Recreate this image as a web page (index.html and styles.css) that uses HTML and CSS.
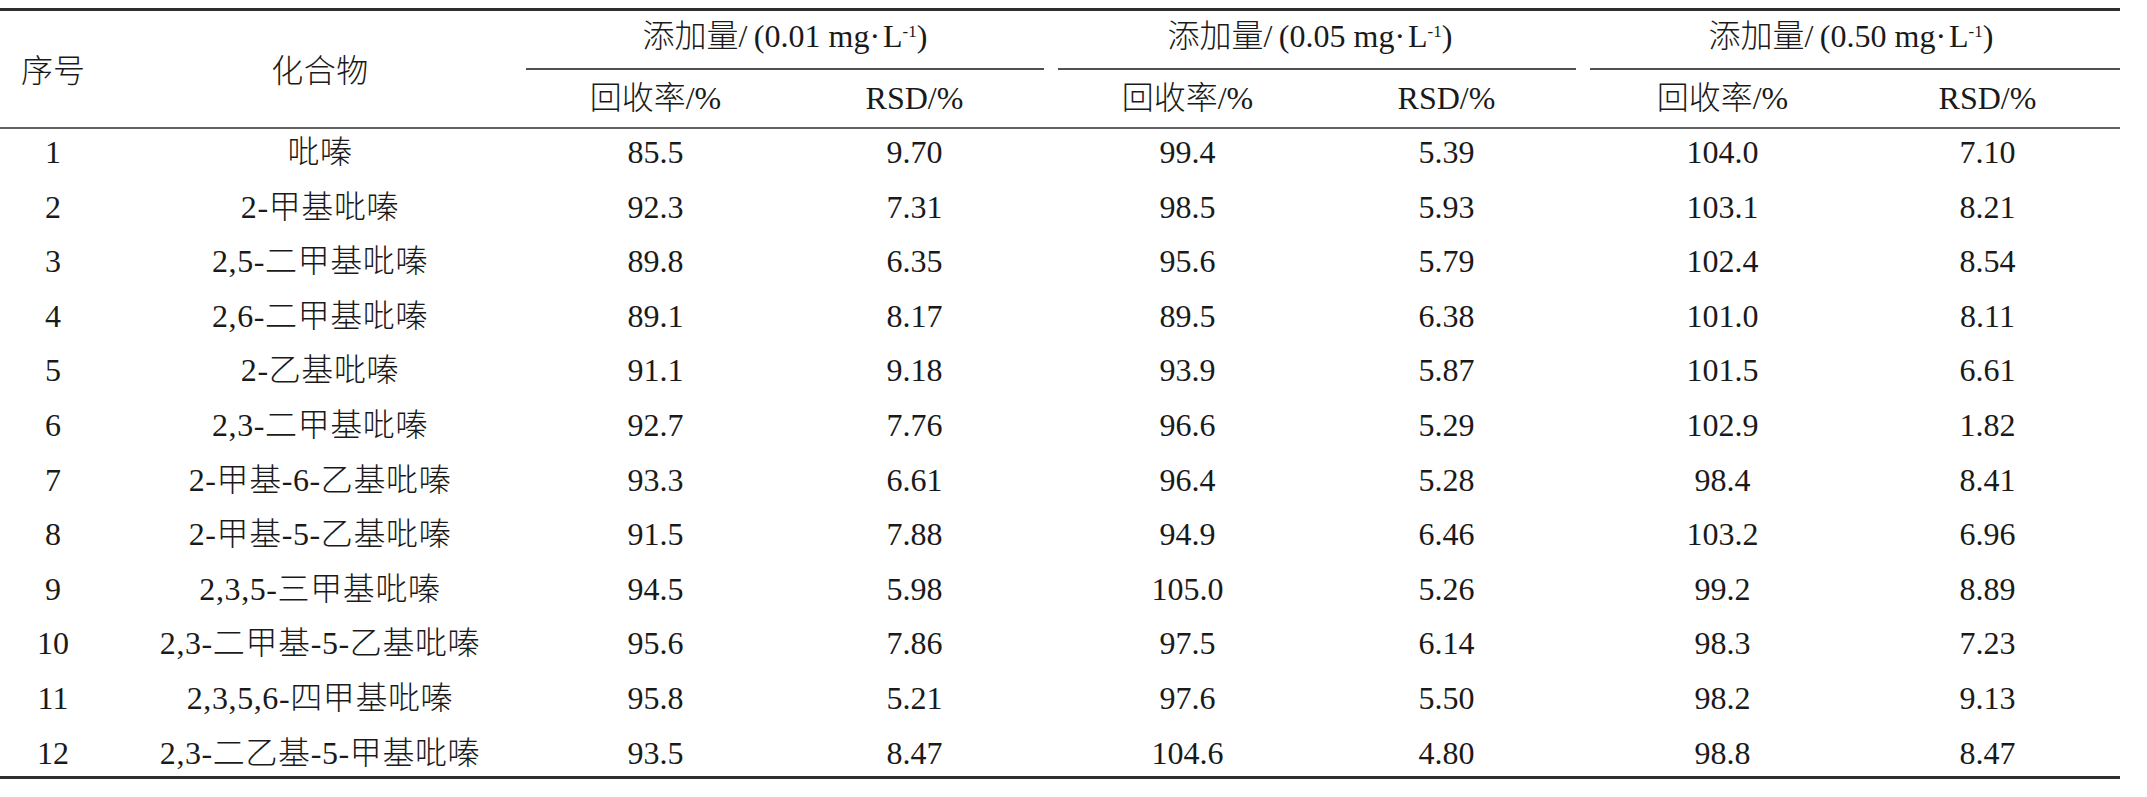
FILE: index.html
```html
<!DOCTYPE html>
<html lang="zh-CN">
<head>
<meta charset="utf-8">
<title>回收率与RSD</title>
<link rel="stylesheet" href="styles.css">
</head>
<body>
<div class="tbl">
  <div class="head">
    <div class="hc h-no">序号</div>
    <div class="hc h-name">化合物</div>
    <div class="grp g1 gapr"><div class="grp-label">添加量/&thinsp;(0.01 mg<span class="dot">·</span>L<sup>-1</sup>)</div></div>
    <div class="grp g2 gapr"><div class="grp-label">添加量/&thinsp;(0.05 mg<span class="dot">·</span>L<sup>-1</sup>)</div></div>
    <div class="grp g3"><div class="grp-label">添加量/&thinsp;(0.50 mg<span class="dot">·</span>L<sup>-1</sup>)</div></div>
    <div class="sub">回收率/%</div>
    <div class="sub gapr">RSD/%</div>
    <div class="sub">回收率/%</div>
    <div class="sub gapr">RSD/%</div>
    <div class="sub">回收率/%</div>
    <div class="sub">RSD/%</div>
  </div>
  <div class="body">
    <div class="row"><div>1</div><div class="name">吡嗪</div><div>85.5</div><div class="gapr">9.70</div><div>99.4</div><div class="gapr">5.39</div><div>104.0</div><div>7.10</div></div>
    <div class="row"><div>2</div><div class="name">2-甲基吡嗪</div><div>92.3</div><div class="gapr">7.31</div><div>98.5</div><div class="gapr">5.93</div><div>103.1</div><div>8.21</div></div>
    <div class="row"><div>3</div><div class="name">2,5-二甲基吡嗪</div><div>89.8</div><div class="gapr">6.35</div><div>95.6</div><div class="gapr">5.79</div><div>102.4</div><div>8.54</div></div>
    <div class="row"><div>4</div><div class="name">2,6-二甲基吡嗪</div><div>89.1</div><div class="gapr">8.17</div><div>89.5</div><div class="gapr">6.38</div><div>101.0</div><div>8.11</div></div>
    <div class="row"><div>5</div><div class="name">2-乙基吡嗪</div><div>91.1</div><div class="gapr">9.18</div><div>93.9</div><div class="gapr">5.87</div><div>101.5</div><div>6.61</div></div>
    <div class="row"><div>6</div><div class="name">2,3-二甲基吡嗪</div><div>92.7</div><div class="gapr">7.76</div><div>96.6</div><div class="gapr">5.29</div><div>102.9</div><div>1.82</div></div>
    <div class="row"><div>7</div><div class="name">2-甲基-6-乙基吡嗪</div><div>93.3</div><div class="gapr">6.61</div><div>96.4</div><div class="gapr">5.28</div><div>98.4</div><div>8.41</div></div>
    <div class="row"><div>8</div><div class="name">2-甲基-5-乙基吡嗪</div><div>91.5</div><div class="gapr">7.88</div><div>94.9</div><div class="gapr">6.46</div><div>103.2</div><div>6.96</div></div>
    <div class="row"><div>9</div><div class="name">2,3,5-三甲基吡嗪</div><div>94.5</div><div class="gapr">5.98</div><div>105.0</div><div class="gapr">5.26</div><div>99.2</div><div>8.89</div></div>
    <div class="row"><div>10</div><div class="name">2,3-二甲基-5-乙基吡嗪</div><div>95.6</div><div class="gapr">7.86</div><div>97.5</div><div class="gapr">6.14</div><div>98.3</div><div>7.23</div></div>
    <div class="row"><div>11</div><div class="name">2,3,5,6-四甲基吡嗪</div><div>95.8</div><div class="gapr">5.21</div><div>97.6</div><div class="gapr">5.50</div><div>98.2</div><div>9.13</div></div>
    <div class="row"><div>12</div><div class="name">2,3-二乙基-5-甲基吡嗪</div><div>93.5</div><div class="gapr">8.47</div><div>104.6</div><div class="gapr">4.80</div><div>98.8</div><div>8.47</div></div>
  </div>
</div>
</body>
</html>
```
FILE: styles.css
```css
html, body {
  margin: 0;
  padding: 0;
  background: #ffffff;
}

body {
  font-family: "Liberation Serif", "Noto Sans CJK SC", serif;
  font-size: 32px;
  font-weight: 300;
  color: #1a1a1a;
}

.tbl {
  width: 2120px;
  margin-top: 8px;
  border-top: 3px solid #2e2e2e;
  border-bottom: 3px solid #2e2e2e;
}

.head,
.row {
  display: grid;
  grid-template-columns: 106px 420px 259px 273px 259px 273px 265px 265px;
  text-align: center;
}

.head {
  grid-template-rows: 59px 57px;
  border-bottom: 2px solid #616161;
}

.hc {
  grid-row: 1 / 3;
  display: flex;
  align-items: center;
  justify-content: center;
  padding-bottom: 2px;
}

.h-no { grid-column: 1; }
.h-name { grid-column: 2; padding-left: 8px; letter-spacing: 0.5px; }

.g1 { grid-column: 3 / 5; }
.g2 { grid-column: 5 / 7; }
.g3 { grid-column: 7 / 9; }

.grp-label {
  height: 50px;
  line-height: 50px;
  padding-bottom: 7px;
  border-bottom: 2px solid #505050;
  white-space: nowrap;
}

.g2 .grp-label { padding-right: 14px; }
.g3 .grp-label { padding-right: 8px; }

.grp-label .dot {
  margin-right: 3px;
}

.grp-label sup {
  font-size: 17px;
  line-height: 0;
  vertical-align: 10px;
}

.sub {
  line-height: 57px;
  grid-row: 2;
}

.gapr {
  padding-right: 14px;
}

.body {
  margin: -4px 0;
}

.row {
  line-height: 54.6px;
  height: 54.6px;
}

.row .name {
  padding-left: 8px;
  letter-spacing: 0.6px;
  white-space: nowrap;
}
```
